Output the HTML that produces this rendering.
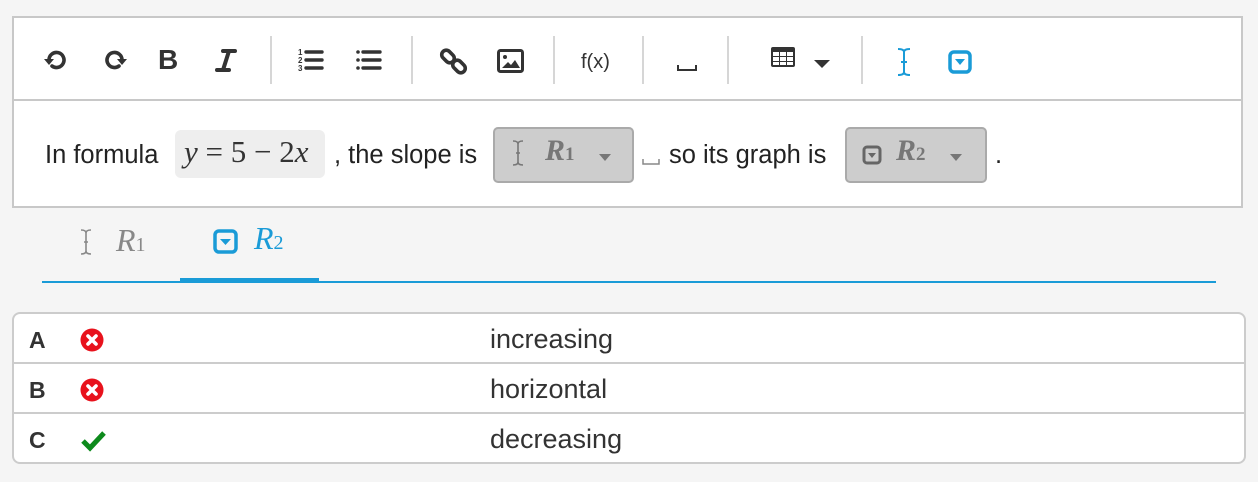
<!DOCTYPE html>
<html><head><meta charset="utf-8">
<style>
*{box-sizing:border-box;margin:0;padding:0}
body{width:1258px;height:482px;background:#f5f5f5;font-family:"Liberation Sans",sans-serif;color:#222;position:relative;overflow:hidden}
.abs{position:absolute}
.editor{left:12px;top:16px;width:1231px;height:192px;background:#fff;border:2px solid #c8c8c8}
.tb{left:0;top:0;width:100%;height:83px;border-bottom:2px solid #c8c8c8}
.sep{position:absolute;top:18px;width:2px;height:48px;background:#d6d6d6}
.ic{position:absolute;top:29px}
.math{font-family:"Liberation Serif",serif;font-style:italic}
.pill{position:absolute;background:#cdcdcd;border:2px solid #aaa;border-radius:5px;height:56px}
.tri{display:inline-block;width:0;height:0;border-left:6px solid transparent;border-right:6px solid transparent;border-top:7px solid #777}
.tbl{left:12px;top:312px;width:1234px;height:152px;background:#fff;border:2px solid #ccc;border-radius:8px;overflow:hidden}
.row{position:absolute;left:0;width:100%;height:50px;border-bottom:2px solid #ccc}
.row .l{position:absolute;left:15px;top:13px;font-weight:bold;font-size:23px;color:#333}
.row .t{position:absolute;left:476px;top:10px;font-size:27px;color:#333}
.row svg{position:absolute;left:66px;top:14px}
.txt{font-size:25.5px;color:#222}
</style></head><body>
<div class="abs editor">
 <div class="abs tb">
  <svg class="ic" style="left:29px" width="26" height="26" viewBox="0 0 26 26"><path d="M6 13a7.5 7.5 0 1 1 3 6" fill="none" stroke="#333" stroke-width="3.6" stroke-linecap="round"/><path d="M1 12h10l-5 6z" fill="#333"/></svg>
  <svg class="ic" style="left:88px" width="26" height="26" viewBox="0 0 26 26"><path d="M20 13a7.5 7.5 0 1 0-3 6" fill="none" stroke="#333" stroke-width="3.6" stroke-linecap="round"/><path d="M25 12H15l5 6z" fill="#333"/></svg>
  <div class="abs" style="left:144px;top:26px;font-size:28px;font-weight:bold;color:#333">B</div>
  <svg class="ic" style="left:200px" width="24" height="26" viewBox="0 0 24 26"><path d="M9 4h12M3 23h12M15 4L9 23" stroke="#333" stroke-width="4" stroke-linecap="round" fill="none"/></svg>
  <div class="sep" style="left:256px"></div>
  <svg class="ic" style="left:284px" width="30" height="26" viewBox="0 0 30 26"><text x="0" y="8" font-size="8" font-weight="bold" fill="#333" font-family="Liberation Sans">1</text><text x="0" y="16" font-size="8" font-weight="bold" fill="#333" font-family="Liberation Sans">2</text><text x="0" y="24" font-size="8" font-weight="bold" fill="#333" font-family="Liberation Sans">3</text><path d="M8 5h16M8 13h16M8 21h16" stroke="#333" stroke-width="3.4" stroke-linecap="round"/></svg>
  <svg class="ic" style="left:341px" width="30" height="26" viewBox="0 0 30 26"><circle cx="3" cy="5" r="1.8" fill="#333"/><circle cx="3" cy="13" r="1.8" fill="#333"/><circle cx="3" cy="21" r="1.8" fill="#333"/><path d="M8 5h17M8 13h17M8 21h17" stroke="#333" stroke-width="3.4" stroke-linecap="round"/></svg>
  <div class="sep" style="left:397px"></div>
  <svg class="ic" style="left:425px" width="30" height="30" viewBox="0 0 30 30"><g fill="none" stroke="#333" stroke-width="3.6"><rect x="2" y="5" width="14" height="9" rx="4.5" transform="rotate(45 9 9.5)"/><rect x="13" y="15" width="14" height="9" rx="4.5" transform="rotate(45 20 19.5)"/></g></svg>
  <svg class="ic" style="left:483px;top:31px" width="27" height="24" viewBox="0 0 27 24"><rect x="1.5" y="1.5" width="24" height="21" rx="2" fill="none" stroke="#333" stroke-width="3"/><circle cx="8" cy="8" r="2" fill="#333"/><path d="M5 19l6-6 3 3 4-5 5 8z" fill="#333"/></svg>
  <div class="sep" style="left:539px"></div>
  <div class="abs" style="left:567px;top:33px;font-size:20px;color:#333">f(x)</div>
  <div class="sep" style="left:628px"></div>
  <svg class="ic" style="left:663px;top:46px" width="20" height="8" viewBox="0 0 20 8"><path d="M1 1v5h18V1" fill="none" stroke="#333" stroke-width="2"/></svg>
  <div class="sep" style="left:713px"></div>
  <svg class="ic" style="left:756px;top:28px" width="26" height="22" viewBox="0 0 26 22"><rect x="1" y="1" width="24" height="20" rx="2" fill="#333"/><g fill="#fff"><rect x="3" y="6" width="6" height="4"/><rect x="10" y="6" width="6" height="4"/><rect x="17" y="6" width="6" height="4"/><rect x="3" y="11" width="6" height="4"/><rect x="10" y="11" width="6" height="4"/><rect x="17" y="11" width="6" height="4"/><rect x="3" y="16" width="6" height="3"/><rect x="10" y="16" width="6" height="3"/><rect x="17" y="16" width="6" height="3"/></g></svg>
  <div class="abs" style="left:800px;top:37px"><span class="tri" style="border-top-color:#333;border-left-width:8px;border-right-width:8px;border-top-width:8px"></span></div>
  <div class="sep" style="left:847px"></div>
  <svg class="ic" style="left:880px;top:29px" width="20" height="30" viewBox="0 0 20 30"><path d="M4 2c4 0 6 1 6 3v20c0 2 2 3 6 3M16 2c-4 0-6 1-6 3v20c0 2-2 3-6 3M7 15h6" fill="none" stroke="#1a9bd7" stroke-width="2"/></svg>
  <svg class="ic" style="left:934px;top:32px" width="24" height="24" viewBox="0 0 24 24"><rect x="2" y="2" width="20" height="20" rx="4" fill="none" stroke="#1a9bd7" stroke-width="3.5"/><path d="M7 9h10l-5 6z" fill="#1a9bd7"/></svg>
 </div>
 <div class="abs txt" style="left:31px;top:123px">In formula</div>
 <div class="abs" style="left:161px;top:112px;width:150px;height:48px;background:#eee;border-radius:6px"></div>
 <div class="abs math" style="left:170px;top:116px;font-size:31px;color:#333">y<span style="font-style:normal"> = 5 − 2</span>x</div>
 <div class="abs txt" style="left:320px;top:123px">, the slope is</div>
 <div class="pill" style="left:479px;top:109px;width:141px"></div>
 <svg class="abs" style="left:496px;top:121px" width="16" height="28" viewBox="0 0 16 28"><path d="M3 2c3 0 5 1 5 3v18c0 2 2 3 5 3M13 2c-3 0-5 1-5 3v18c0 2-2 3-5 3M6 14h4" fill="none" stroke="#777" stroke-width="1.6"/></svg>
 <div class="abs math" style="left:531px;top:116px;font-size:30px;font-weight:bold;color:#777">R<span style="font-size:19px;font-style:normal">1</span></div>
 <div class="abs" style="left:585px;top:130px"><span class="tri"></span></div>
 <svg class="abs" style="left:628px;top:140px" width="18" height="8" viewBox="0 0 18 8"><path d="M1 1v5h16V1" fill="none" stroke="#888" stroke-width="1.5"/></svg>
 <div class="abs txt" style="left:655px;top:123px">so its graph is</div>
 <div class="pill" style="left:831px;top:109px;width:142px"></div>
 <svg class="abs" style="left:848px;top:127px" width="20" height="20" viewBox="0 0 20 20"><rect x="2" y="2" width="16" height="16" rx="3" fill="none" stroke="#666" stroke-width="3"/><path d="M6 8h8l-4 5z" fill="#666"/></svg>
 <div class="abs math" style="left:882px;top:116px;font-size:30px;font-weight:bold;color:#777">R<span style="font-size:19px;font-style:normal">2</span></div>
 <div class="abs" style="left:936px;top:130px"><span class="tri"></span></div>
 <div class="abs txt" style="left:981px;top:123px">.</div>
</div>
<svg class="abs" style="left:78px;top:228px" width="16" height="28" viewBox="0 0 16 28"><path d="M3 2c3 0 5 1 5 3v18c0 2 2 3 5 3M13 2c-3 0-5 1-5 3v18c0 2-2 3-5 3M6 14h4" fill="none" stroke="#888" stroke-width="1.6"/></svg>
<div class="abs math" style="left:116px;top:222px;font-size:32px;color:#888">R<span style="font-size:20px;font-style:normal">1</span></div>
<svg class="abs" style="left:213px;top:229px" width="26" height="26" viewBox="0 0 26 26"><rect x="2" y="2" width="21" height="21" rx="4" fill="none" stroke="#1a9bd7" stroke-width="3.5"/><path d="M7 10h11l-5.5 6z" fill="#1a9bd7"/></svg>
<div class="abs math" style="left:254px;top:220px;font-size:32px;color:#1a9bd7">R<span style="font-size:20px;font-style:normal">2</span></div>
<div class="abs" style="left:42px;top:281px;width:1174px;height:2px;background:#1a9bd7"></div>
<div class="abs" style="left:180px;top:278px;width:139px;height:5px;background:#1a9bd7"></div>
<div class="abs tbl">
 <div class="row" style="top:0"><span class="l">A</span><svg width="24" height="24" viewBox="0 0 24 24"><circle cx="12" cy="12" r="11.5" fill="#e8121c"/><path d="M8 8l8 8M16 8l-8 8" stroke="#fff" stroke-width="3.6" stroke-linecap="round"/></svg><span class="t">increasing</span></div>
 <div class="row" style="top:50px"><span class="l">B</span><svg width="24" height="24" viewBox="0 0 24 24"><circle cx="12" cy="12" r="11.5" fill="#e8121c"/><path d="M8 8l8 8M16 8l-8 8" stroke="#fff" stroke-width="3.6" stroke-linecap="round"/></svg><span class="t">horizontal</span></div>
 <div class="row" style="top:100px;border-bottom:none"><span class="l">C</span><svg width="26" height="24" viewBox="0 0 26 24"><path d="M3 13l7 7L24 5" fill="none" stroke="#0d8a1c" stroke-width="5"/></svg><span class="t">decreasing</span></div>
</div>
</body></html>
